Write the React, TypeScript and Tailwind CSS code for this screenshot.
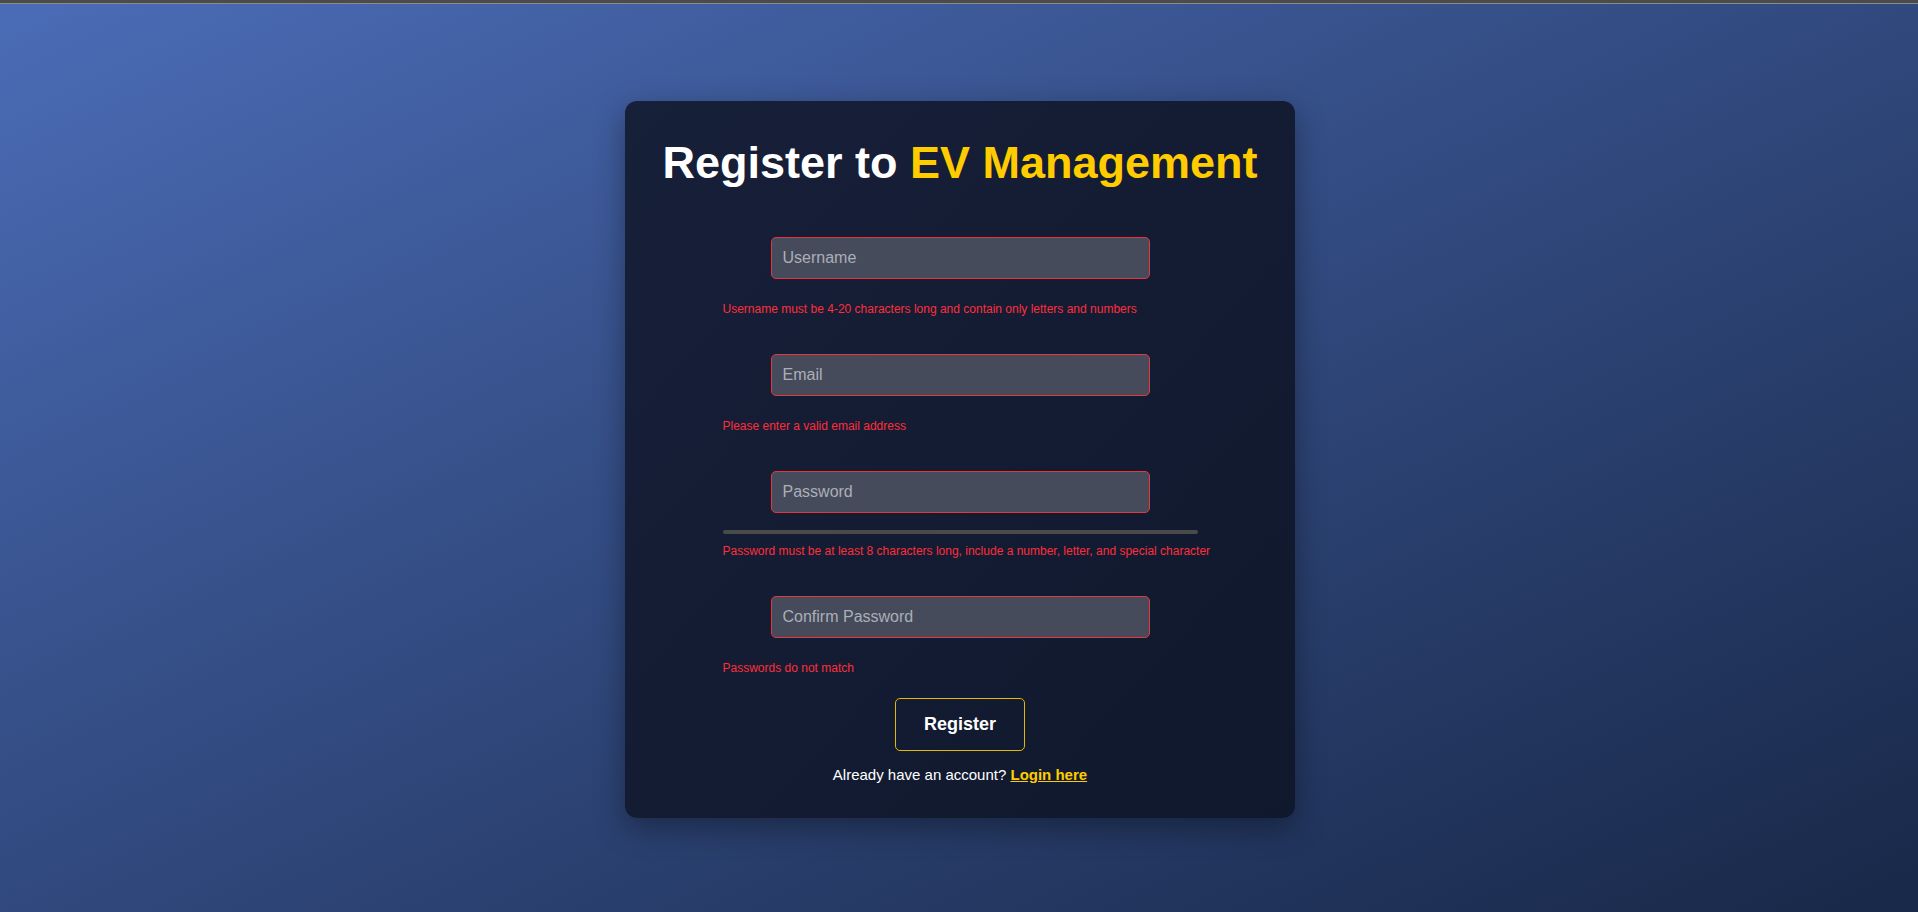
import { useState } from 'react';

interface Field {
  name: string;
  type: string;
  placeholder: string;
  error: string;
}

const fields: Field[] = [
  {
    name: 'username',
    type: 'text',
    placeholder: 'Username',
    error: 'Username must be 4-20 characters long and contain only letters and numbers',
  },
  {
    name: 'email',
    type: 'email',
    placeholder: 'Email',
    error: 'Please enter a valid email address',
  },
  {
    name: 'password',
    type: 'password',
    placeholder: 'Password',
    error: 'Password must be at least 8 characters long, include a number, letter, and special character',
  },
  {
    name: 'confirm',
    type: 'password',
    placeholder: 'Confirm Password',
    error: 'Passwords do not match',
  },
];

export default function App() {
  const [values, setValues] = useState<Record<string, string>>({});

  return (
    <div
      className="h-screen flex flex-col bg-gradient-to-br from-[#4b6cb7] to-[#182848] text-white"
      style={{ fontFamily: '"Liberation Sans", Arial, sans-serif' }}
    >
      {/* top strip */}
      <div className="h-[4px] bg-[#4b4b4b] border-b border-[#8c8c8c]" />

      <div className="flex justify-center pt-[97px] pl-[2px]">
        <div className="w-[670px] rounded-[12px] bg-gradient-to-br from-[#172039] to-[#10182d] pt-[36px] pb-[35px] shadow-[0_10px_30px_rgba(0,0,0,0.35)]">
          <h1 className="text-center text-[45px] leading-[52px] font-bold">
            Register to <span className="text-[#ffcc00]">EV Management</span>
          </h1>

          <form className="w-[475px] mx-auto mt-[48px]" onSubmit={(e) => e.preventDefault()}>
            {fields.map((field, i) => (
              <div key={field.name} className={i > 0 ? 'mt-[38px]' : ''}>
                <input
                  type={field.type}
                  placeholder={field.placeholder}
                  value={values[field.name] ?? ''}
                  onChange={(e) => setValues({ ...values, [field.name]: e.target.value })}
                  className="block w-[379px] h-[42px] mx-auto px-[11px] rounded-[5px] border border-[#e8363d] bg-[#454b5b] text-[16px] text-white placeholder:text-[#abafb7] outline-none"
                />
                {field.name === 'password' && (
                  <div className="mt-[17px] h-[4px] rounded-full bg-[#4a4a4a]" />
                )}
                <p
                  className={`${field.name === 'password' ? 'mt-[10px]' : 'mt-[23px]'} text-[12px] leading-[14px] text-[#ff2d3a] whitespace-nowrap`}
                >
                  {field.error}
                </p>
              </div>
            ))}

            <div className="flex justify-center mt-[23px]">
              <button
                type="submit"
                className="w-[130px] h-[53px] rounded-[5px] border border-[#e6b800] text-[18px] font-bold text-white"
              >
                Register
              </button>
            </div>

            <p className="mt-[15px] text-center text-[15px] leading-[17px] text-white">
              Already have an account?{' '}
              <a href="#" className="font-bold text-[#ffcc00] underline">
                Login here
              </a>
            </p>
          </form>
        </div>
      </div>
    </div>
  );
}
